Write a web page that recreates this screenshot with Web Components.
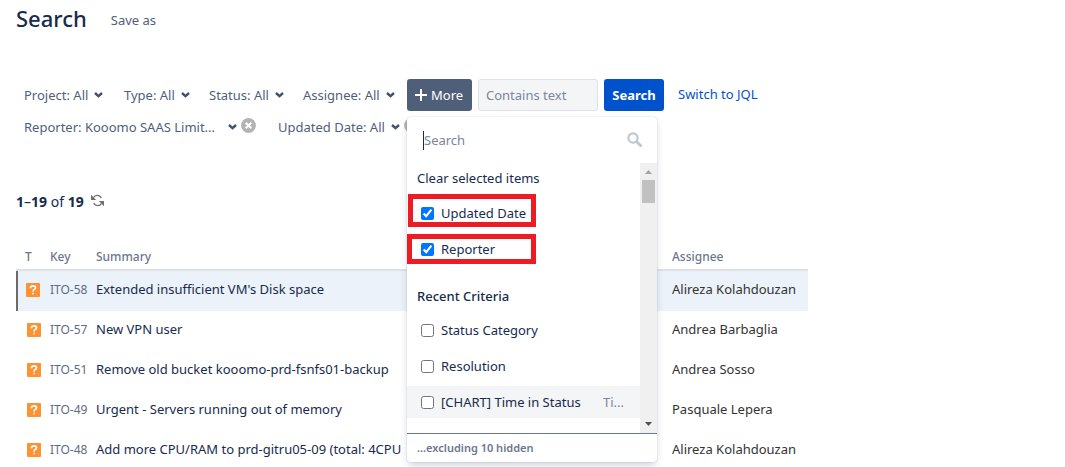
<!DOCTYPE html>
<html lang="en">
<head>
<meta charset="utf-8">
<title>Search</title>
<style>
html,body{margin:0;height:100%;overflow:hidden;background:#fff}
body{font:13px/20px "Noto Sans","Open Sans",sans-serif;color:#172b4d}
</style>
</head>
<body>
<issue-search>
  <search-header slot="header" heading="Search"></search-header>
  <criteria-bar slot="criteria"></criteria-bar>
  <issue-results slot="results"></issue-results>
</issue-search>
<script>
const define = (name, html, setup) => {
  const template = document.createElement('template');
  template.innerHTML = '<style>*{box-sizing:border-box}button,input{font:inherit;color:inherit;margin:0}button{border:0;background:none;padding:0;text-align:left;white-space:nowrap;cursor:pointer}a{text-decoration:none}svg{display:block;flex:none}</style>' + html;
  customElements.define(name, class extends HTMLElement {
    constructor() {
      super();
      this.attachShadow({mode: 'open'}).append(template.content.cloneNode(true));
    }
    connectedCallback() { if (setup) setup(this, this.shadowRoot); }
  });
};

define('issue-search', `
<style>
:host{display:block;padding:0 16px}
</style>
<slot name="header"></slot>
<main><slot name="criteria"></slot><slot name="results"></slot></main>`);

define('search-header', `
<style>
:host{display:flex;align-items:center;gap:24px;height:40px}
h1{margin:0;font-size:22px;line-height:36px;font-weight:500;padding-bottom:4px}
button{color:#505f79}
</style>
<h1></h1><button type="button">Save as</button>`,
(el, root) => { root.querySelector('h1').textContent = el.getAttribute('heading'); });

define('criteria-filter', `
<style>
:host{display:flex;align-items:center;height:32px;gap:4px}
button{display:flex;align-items:center;gap:6px;height:32px;padding-left:8px;color:#505f79}
:host([removable]) .main{flex:1}
:host([wide]) .main{justify-content:space-between}
.remove{display:none;padding:0 0 4px;height:auto}
:host([removable]) .remove{display:block}
</style>
<button type="button" class="main"><span><slot></slot></span>
<svg width="9" height="6" viewBox="0 0 9 6"><path d="M1 1 4.500 4.200 8 1" fill="none" stroke="#42526e" stroke-width="2.400"/></svg></button>
<button type="button" class="remove" aria-label="Remove filter"><svg width="15" height="15" viewBox="0 0 15 15"><circle cx="7.500" cy="7.500" r="7.400" fill="#b3b3b3"/><path d="m4.700 4.700 5.600 5.600m0-5.600-5.600 5.600" stroke="#fff" stroke-width="2"/></svg></button>`);

define('criteria-bar', `
<style>
:host{display:block;padding-top:39px}
.row{display:flex;height:32px}
.f1{width:100px}.f2{width:85px}.f3{width:94px}.f4{width:112px}
.r1{width:240px}.r2{margin-left:14px}
.anchor{position:relative}
.more{display:flex;align-items:center;gap:4px;width:65px;height:32px;padding-left:8px;border-radius:3px;background:#505f79;color:#fff}
more-menu{position:absolute;top:38px;left:0;z-index:1}
input{width:120px;height:32px;margin:0 6px;padding:0 7px;border:1px solid #dfe1e6;border-radius:3px;background:#f4f5f7;outline:0}
input::placeholder{color:#7a869a;opacity:1}
.go{width:60px;height:32px;border-radius:3px;background:#0052cc;color:#fff;font-weight:700;text-align:center}
a{margin-left:14px;line-height:30px;color:#0052cc}
</style>
<form role="search">
<div class="row">
<criteria-filter class="f1">Project: All</criteria-filter>
<criteria-filter class="f2">Type: All</criteria-filter>
<criteria-filter class="f3">Status: All</criteria-filter>
<criteria-filter class="f4">Assignee: All</criteria-filter>
<div class="anchor"><button type="button" class="more" aria-expanded="true"><svg width="12" height="12" viewBox="0 0 12 12"><path d="M6 0v12M0 6h12" stroke="#fff" stroke-width="2"/></svg>More</button><more-menu></more-menu></div>
<input type="text" placeholder="Contains text" aria-label="Contains text">
<button type="button" class="go">Search</button>
<a href="#jql">Switch to JQL</a>
</div>
<div class="row">
<criteria-filter class="r1" removable wide>Reporter: Kooomo SAAS Limit...</criteria-filter>
<criteria-filter class="r2" removable>Updated Date: All</criteria-filter>
</div>
</form>`);

define('criteria-option', `
<style>
:host{display:block;position:relative;height:32px;margin-bottom:4px}
:host([active]){background:#f4f5f7}
label{display:flex;align-items:center;height:32px;padding:0 16px 0 14px;white-space:nowrap}
input{width:13px;height:13px;margin-right:7px;accent-color:#0075ff}
.hint{margin-left:auto;color:#7a869a}
.mark{display:none;position:absolute;left:0;width:129px;border:5px solid #ed1c24;pointer-events:none}
:host([marked]) .mark{display:block}
:host([marked=tall]) .mark{top:-3px;bottom:2px;left:1px;width:128px}
:host([marked=short]) .mark{top:1px;bottom:1px}
</style>
<label><input type="checkbox"><slot></slot><span class="hint"></span></label><span class="mark"></span>`,
(el, root) => {
  root.querySelector('input').checked = el.hasAttribute('checked');
  root.querySelector('.hint').textContent = el.getAttribute('hint') || '';
});

define('more-menu', `
<style>
:host{display:block;width:250px;border-radius:3px;background:#fff;box-shadow:0 4px 8px -2px rgba(9,30,66,.25),0 0 1px rgba(9,30,66,.31)}
.find{display:flex;align-items:center;height:46px;padding:0 14px 0 16px}
.find i{width:1px;height:19px;background:#172b4d}
.find input{flex:1;min-width:0;border:0;padding:0;background:none;outline:0}
input::placeholder{color:#7a869a;opacity:1}
.body{display:flex;height:270px}
.list{flex:1;overflow:hidden}
.clear{display:block;height:30px;margin-bottom:4px;padding-left:10px}
h2{margin:14px 0 0;padding:0 10px;font-size:13px;line-height:35px;font-weight:500}
.bar{display:flex;flex-direction:column;align-items:center;width:17px;background:#f0f0f0}
.thumb{width:13px;height:23px;background:#c1c1c1;margin-bottom:auto}
footer{height:29px;padding:0 10px;border-top:1px solid #6b778c;font-size:11px;line-height:28px;font-weight:600;color:#6b778c}
</style>
<div class="find"><i></i><input type="text" placeholder="Search" aria-label="Search criteria"><svg width="16" height="16" viewBox="0 0 16 16"><circle cx="6" cy="6" r="4.600" fill="none" stroke="#c1c7d0" stroke-width="2.200"/><path d="m9.500 9.500 5 5" stroke="#c1c7d0" stroke-width="3"/></svg></div>
<div class="body"><div class="list">
<button type="button" class="clear">Clear selected items</button>
<criteria-option checked marked="tall">Updated Date</criteria-option>
<criteria-option checked marked="short">Reporter</criteria-option>
<h2>Recent Criteria</h2>
<criteria-option>Status Category</criteria-option>
<criteria-option>Resolution</criteria-option>
<criteria-option active hint="Ti...">[CHART] Time in Status</criteria-option>
</div><div class="bar" aria-hidden="true">
<svg width="17" height="17" viewBox="0 0 17 17"><path d="m5 11 3.500-4 3.500 4z" fill="#a3a3a3"/></svg><span class="thumb"></span>
<svg width="17" height="17" viewBox="0 0 17 17"><path d="m5 6 3.500 4 3.500-4z" fill="#505050"/></svg></div></div>
<footer>...excluding 10 hidden</footer>`);

define('issue-type', `
<style>
:host{display:block;width:14px;height:14px;border-radius:1px;background:#fb9332}
</style>
<svg width="14" height="14" viewBox="0 0 14 14" role="img" aria-label="Question"><path d="M4.600 5.200V4.800C4.600 3.500 5.600 2.900 7 2.900S9.500 3.700 9.500 4.800C9.500 6.500 7 6.300 7 8.500M7 9.700v1.600" fill="none" stroke="#fff" stroke-width="1.700"/></svg>`);

define('issue-results', `
<style>
:host{display:block;margin-top:49px;max-width:792px}
.count{display:flex;align-items:center;gap:7px;height:20px;font-size:14px}
.count button{padding-bottom:4px}
table{width:100%;margin-top:31px;border-collapse:separate;border-spacing:0;table-layout:fixed}
.t{width:34px}.k{width:46px}.a{width:136px}
th{height:28px;padding:2px 0 0;border-bottom:2px solid #dfe1e6;text-align:left;font-size:12px;line-height:20px;font-weight:500;color:#6b778c}
td{height:40px;padding:0 0 4px;white-space:nowrap;overflow:hidden}
th:first-child,td:first-child{padding-left:9px}
td:first-child{padding-left:11px;padding-bottom:2px}
td:nth-child(2) a{font-size:12px;color:#5e6c84}
td:last-child{color:#333}
td a{color:inherit}
tr.on td{background:#ebf2f9}
tr.on td:first-child{border-left:2px solid #6b6b6b;padding-left:8px}
</style>
<div class="count"><span><b>1</b>–<b>19</b> of <b>19</b></span><button type="button" aria-label="Refresh results"><svg width="13" height="13" viewBox="0 0 13 13"><path d="M2.500 3.500C4 .8 8.500.3 10.300 4M10.500 9.500C9 12.200 4.500 12.700 2.700 9" fill="none" stroke="#707070" stroke-width="1.400"/><path d="M0 .8V6h5.200zM13 12.200V7H7.800z" fill="#707070"/></svg></button></div>
<table>
<colgroup><col class="t"><col class="k"><col><col class="a"></colgroup>
<thead><tr><th scope="col">T</th><th scope="col">Key</th><th scope="col">Summary</th><th scope="col">Assignee</th></tr></thead>
<tbody></tbody></table>`,
(el, root) => {
  const issues = [
    ['ITO-58', "Extended insufficient VM's Disk space", 'Alireza Kolahdouzan'],
    ['ITO-57', 'New VPN user', 'Andrea Barbaglia'],
    ['ITO-51', 'Remove old bucket kooomo-prd-fsnfs01-backup', 'Andrea Sosso'],
    ['ITO-49', 'Urgent - Servers running out of memory', 'Pasquale Lepera'],
    ['ITO-48', 'Add more CPU/RAM to prd-gitru05-09 (total: 4CPU', 'Alireza Kolahdouzan']
  ];
  root.querySelector('tbody').innerHTML = issues.map(([key, summary, who], i) =>
    `<tr${i ? '' : ' class="on"'}><td><issue-type></issue-type></td><td><a href="#${key}">${key}</a></td><td><a href="#${key}">${summary}</a></td><td>${who}</td></tr>`).join('');
});
</script>
</body>
</html>
